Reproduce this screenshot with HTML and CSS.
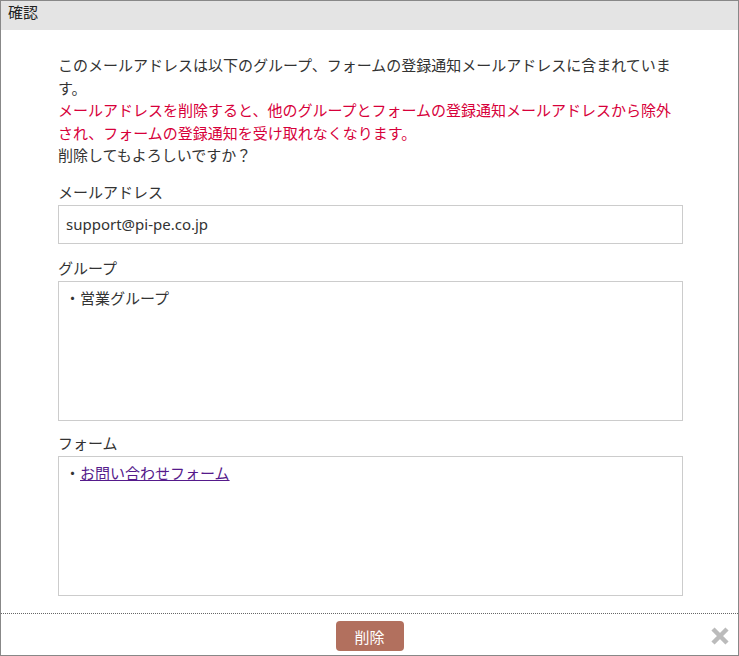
FILE: index.html
```html
<!DOCTYPE html>
<html>
  <head>
    <title>確認</title>
    <link rel="stylesheet" href="styles.css">
  </head>
  <body>
    <div class="dialog">
      <div class="dialog-header">確認</div>

      <div class="dialog-body">
        <p class="message">
          このメールアドレスは以下のグループ、フォームの登録通知メールアドレスに含まれています。<br>
          <span class="warning">メールアドレスを削除すると、他のグループとフォームの登録通知メールアドレスから除外され、フォームの登録通知を受け取れなくなります。</span><br>
          削除してもよろしいですか？
        </p>

        <div class="field-label">メールアドレス</div>
        <div class="field-value">support@pi-pe.co.jp</div>

        <div class="field-label">グループ</div>
        <ul class="field-list">
          <li>・営業グループ</li>
        </ul>

        <div class="field-label">フォーム</div>
        <ul class="field-list">
          <li>・<a href="#">お問い合わせフォーム</a></li>
        </ul>
      </div>

      <div class="dialog-footer">
        <button class="delete-button">削除</button>
        <span class="close-button">
          <svg width="20" height="20" viewBox="0 0 20 20">
            <path d="M3 3 L17 17 M17 3 L3 17" stroke="#bbbbbb" stroke-width="4.5" />
          </svg>
        </span>
      </div>
    </div>
  </body>
</html>
```

FILE: styles.css
```css
body {
  margin: 0;
  font-family: "Noto Sans", "Noto Sans CJK JP", sans-serif;
  font-size: 15px;
  color: #333333;
  background-color: #ffffff;
}

.dialog {
  border: 1px solid #888888;
  height: 656px;
  box-sizing: border-box;
  display: flex;
  flex-direction: column;
}

.dialog-header {
  height: 29px;
  background-color: #e4e4e4;
  padding-left: 7px;
  line-height: 22px;
  color: #222222;
}

.dialog-body {
  flex: 1;
  padding: 24px 55px 0 57px;
  line-height: 22.5px;
}

.message {
  margin: 0 0 14px 0;
}

.warning {
  color: #d7003a;
}

.field-label {
  margin-bottom: 1.5px;
}

.field-value {
  border: 1px solid #cccccc;
  height: 37px;
  line-height: 37px;
  padding: 0 7px;
  margin-bottom: 13px;
}

.field-list {
  list-style: none;
  margin: 0 0 11px 0;
  padding: 5px 6px;
  border: 1px solid #cccccc;
  height: 128px;
}

.field-list a {
  color: #551a8b;
}

.dialog-footer {
  position: relative;
  border-top: 1px dotted #666666;
  padding: 7px 0 4px 0;
  text-align: center;
}

.delete-button {
  background-color: #b2705e;
  color: #ffffff;
  border: none;
  border-radius: 4px;
  width: 68px;
  height: 30px;
  font-family: inherit;
  font-size: 15px;
  cursor: pointer;
}

.close-button {
  position: absolute;
  right: 8px;
  top: 12px;
  width: 20px;
  height: 20px;
}
```
